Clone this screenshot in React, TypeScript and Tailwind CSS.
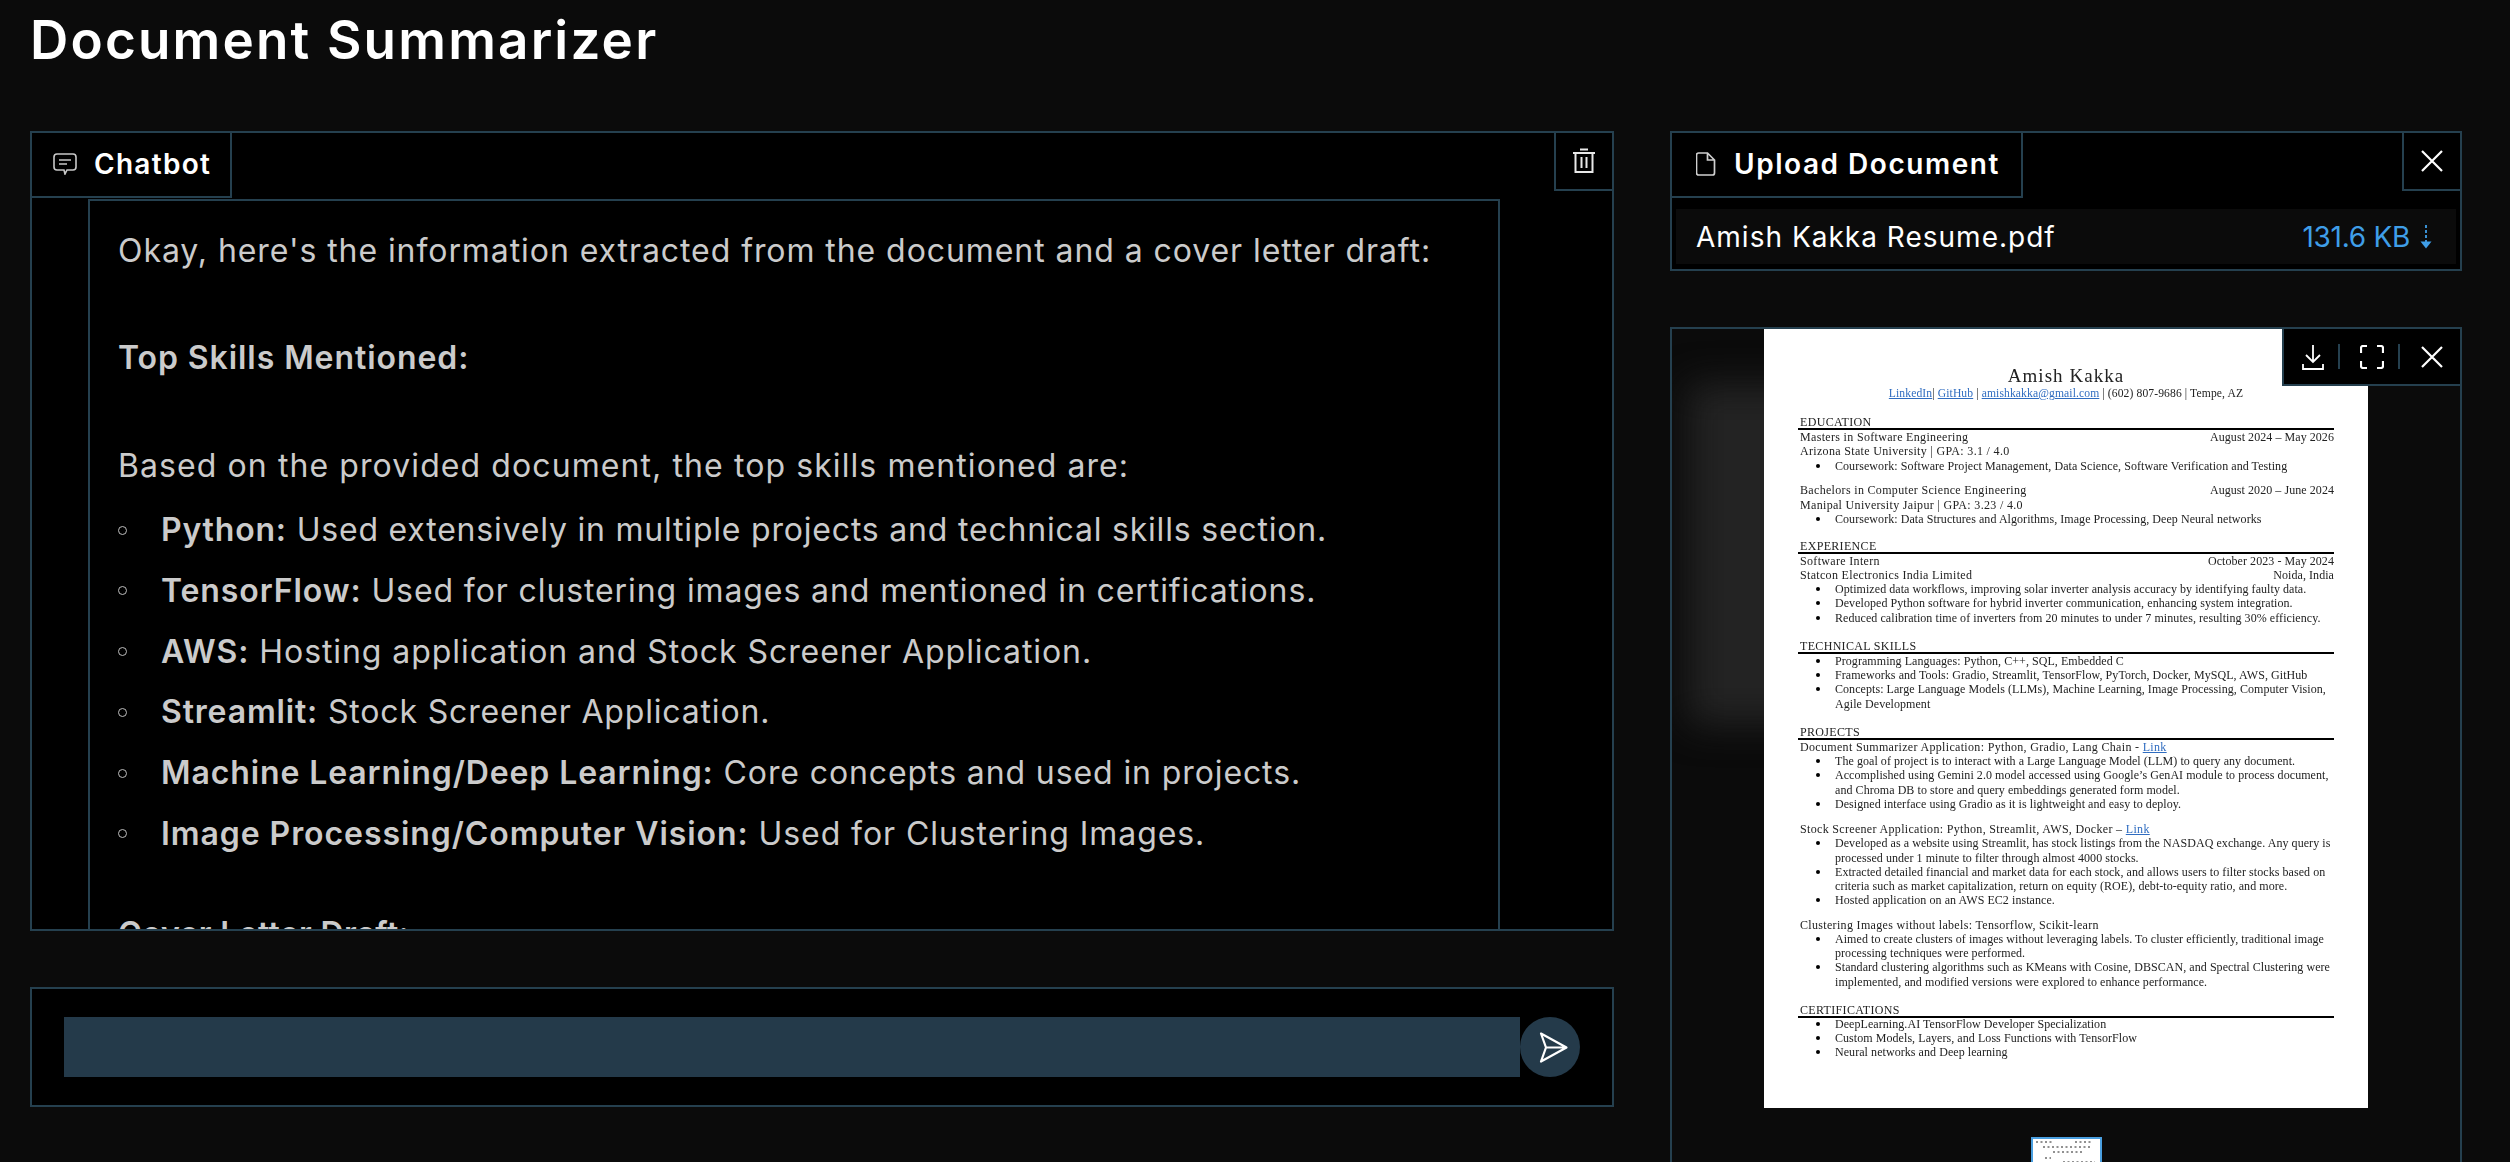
import { ReactNode } from "react";

const skills = [
  { name: "Python:", text: " Used extensively in multiple projects and technical skills section.", cls: "tracking-[0.025em]" },
  { name: "TensorFlow:", text: " Used for clustering images and mentioned in certifications.", cls: "tracking-[0.028em]" },
  { name: "AWS:", text: " Hosting application and Stock Screener Application.", cls: "tracking-[0.029em]" },
  { name: "Streamlit:", text: " Stock Screener Application.", cls: "tracking-[0.026em]" },
  { name: "Machine Learning/Deep Learning:", text: " Core concepts and used in projects.", cls: "tracking-[0.028em]" },
  { name: "Image Processing/Computer Vision:", text: " Used for Clustering Images.", cls: "tracking-[0.029em]" },
];

function CloseIcon() {
  return (
    <svg width="22" height="22" viewBox="0 0 22 22" fill="none" stroke="white" strokeWidth="2.2">
      <path d="M1 1 21 21M21 1 1 21" />
    </svg>
  );
}

function Head({ children }: { children: ReactNode }) {
  return <div className="mt-[14px] h-[13px] border-b-2 border-black leading-[14px] tracking-[0.027em] box-content pl-[2px]">{children}</div>;
}

function Row({ left, right }: { left: ReactNode; right?: string }) {
  return (
    <div className="flex justify-between h-[14.25px] pl-[2px] tracking-[0.027em]">
      <span>{left}</span>
      {right && <span className="tracking-[0.005em]">{right}</span>}
    </div>
  );
}

function Item({ children }: { children: ReactNode }) {
  return (
    <div className="relative pl-[37px]">
      <span className="absolute left-[18px] top-[5px] w-[4px] h-[4px] rounded-full bg-black" />
      {children}
    </div>
  );
}

function Link({ children }: { children: ReactNode }) {
  return <span className="text-[#2f6cc0] underline">{children}</span>;
}

function Resume() {
  return (
    <div className="relative z-10 w-[604px] h-[779px] shrink-0 bg-white px-[34px] pt-[36px] text-[#222] font-['Liberation_Serif',serif] text-[12px] leading-[14.25px] tracking-[0.005em] blur-[0.3px]">
      <div className="text-center text-[19px] leading-[22px] tracking-[0.055em]">Amish Kakka</div>
      <div className="text-center text-[11.6px] leading-[14px] tracking-[0.01em]">
        <Link>LinkedIn</Link>| <Link>GitHub</Link> | <Link>amishkakka@gmail.com</Link> | (602) 807-9686 | Tempe, AZ
      </div>

      <Head>EDUCATION</Head>
      <Row left="Masters in Software Engineering" right="August 2024 – May 2026" />
      <Row left="Arizona State University | GPA: 3.1 / 4.0" />
      <Item>Coursework: Software Project Management, Data Science, Software Verification and Testing</Item>
      <div className="mt-[10.5px]">
        <Row left="Bachelors in Computer Science Engineering" right="August 2020 – June 2024" />
      </div>
      <Row left="Manipal University Jaipur | GPA: 3.23 / 4.0" />
      <Item>Coursework: Data Structures and Algorithms, Image Processing, Deep Neural networks</Item>

      <div className="-mt-[1.5px]">
        <Head>EXPERIENCE</Head>
      </div>
      <Row left="Software Intern" right="October 2023 - May 2024" />
      <Row left="Statcon Electronics India Limited" right="Noida, India" />
      <Item>Optimized data workflows, improving solar inverter analysis accuracy by identifying faulty data.</Item>
      <Item>Developed Python software for hybrid inverter communication, enhancing system integration.</Item>
      <Item>Reduced calibration time of inverters from 20 minutes to under 7 minutes, resulting 30% efficiency.</Item>

      <Head>TECHNICAL SKILLS</Head>
      <Item>Programming Languages: Python, C++, SQL, Embedded C</Item>
      <Item>Frameworks and Tools: Gradio, Streamlit, TensorFlow, PyTorch, Docker, MySQL, AWS, GitHub</Item>
      <Item>Concepts: Large Language Models (LLMs), Machine Learning, Image Processing, Computer Vision, Agile Development</Item>

      <Head>PROJECTS</Head>
      <Row left={<>Document Summarizer Application: Python, Gradio, Lang Chain - <Link>Link</Link></>} />
      <Item>The goal of project is to interact with a Large Language Model (LLM) to query any document.</Item>
      <Item>Accomplished using Gemini 2.0 model accessed using Google’s GenAI module to process document, and Chroma DB to store and query embeddings generated form model.</Item>
      <Item>Designed interface using Gradio as it is lightweight and easy to deploy.</Item>
      <div className="mt-[11px]">
        <Row left={<>Stock Screener Application: Python, Streamlit, AWS, Docker – <Link>Link</Link></>} />
      </div>
      <Item>Developed as a website using Streamlit, has stock listings from the NASDAQ exchange. Any query is processed under 1 minute to filter through almost 4000 stocks.</Item>
      <Item>Extracted detailed financial and market data for each stock, and allows users to filter stocks based on criteria such as market capitalization, return on equity (ROE), debt-to-equity ratio, and more.</Item>
      <Item>Hosted application on an AWS EC2 instance.</Item>
      <div className="mt-[10px]">
        <Row left="Clustering Images without labels: Tensorflow, Scikit-learn" />
      </div>
      <Item>Aimed to create clusters of images without leveraging labels. To cluster efficiently, traditional image processing techniques were performed.</Item>
      <Item>Standard clustering algorithms such as KMeans with Cosine, DBSCAN, and Spectral Clustering were implemented, and modified versions were explored to enhance performance.</Item>

      <Head>CERTIFICATIONS</Head>
      <div className="-mt-[1px]">
        <Item>DeepLearning.AI TensorFlow Developer Specialization</Item>
        <Item>Custom Models, Layers, and Loss Functions with TensorFlow</Item>
        <Item>Neural networks and Deep learning</Item>
      </div>
    </div>
  );
}

function Thumb() {
  return (
    <div className="w-[71px] h-[40px] mt-[29px] shrink-0 border-2 border-[#4a9fe0] bg-white">
      <svg width="67" height="36" viewBox="0 0 67 36" stroke="#222" strokeWidth="1" strokeDasharray="2 2.5">
        <path d="M3 3H20M42 3H60M10 8H58M20 13H50M12 19H18M30 23H62M8 27H52M16 31H60" />
      </svg>
    </div>
  );
}

export default function App() {
  return (
    <div className="h-[1162px] overflow-hidden bg-[#0b0b0b] font-['Inter',sans-serif] pl-[30px] pr-[48px]">
      <h1 className="h-[131px] pt-[10px] text-[53px] leading-[60px] font-semibold tracking-[0.041em] text-white">
        Document Summarizer
      </h1>

      <div className="flex gap-[56px] items-start">
        <div className="w-[1584px] shrink-0">
          <section className="h-[800px] border-2 border-[#25404f] bg-black overflow-hidden">
            <div className="flex justify-between items-start h-[66px]">
              <div className="h-[65px] w-[200px] border-r-2 border-b-2 border-[#25404f] flex items-center gap-[17px] pl-[21px] pb-[2px] text-[28px] font-semibold tracking-[0.046em] text-white">
                <svg width="24" height="22" viewBox="0 0 24 22" fill="none" stroke="#c8c8c8" strokeWidth="1.6">
                  <path d="M4 1h16a3 3 0 0 1 3 3v10a3 3 0 0 1-3 3h-6l-2 4-1-4H4a3 3 0 0 1-3-3V4a3 3 0 0 1 3-3Z" />
                  <path d="M6 7h12M6 11h8" />
                </svg>
                <span>Chatbot</span>
              </div>
              <button className="w-[58px] h-[58px] border-l-2 border-b-2 border-[#25404f] flex items-center justify-center">
                <svg width="22" height="26" viewBox="0 0 22 26" fill="none" stroke="#e8e8e8" strokeWidth="2">
                  <path d="M7 1.5h8M0 5h22M2.5 5v19h17V5M8.5 9v11M13.5 9v11" />
                </svg>
              </button>
            </div>
            <div className="ml-[56px] w-[1412px] h-[800px] border-2 border-[#25404f] px-[28px] pt-[26px] text-[#cbcbcb] text-[32px] leading-[48px] tracking-[0.029em]">
              <p>Okay, here's the information extracted from the document and a cover letter draft:</p>
              <p className="mt-[59px] font-semibold">Top Skills Mentioned:</p>
              <p className="mt-[60px] tracking-[0.034em]">Based on the provided document, the top skills mentioned are:</p>
              <ul className="mt-[16px]">
                {skills.map((s) => (
                  <li key={s.name} className="flex items-center mb-[12.8px]">
                    <span className="w-[9px] h-[9px] rounded-full border border-[#bdbdbd] mr-[34px] shrink-0" />
                    <span className={`whitespace-pre ${s.cls}`}>
                      <b className="font-semibold">{s.name}</b>
                      {s.text}
                    </span>
                  </li>
                ))}
              </ul>
              <p className="mt-[52px] font-semibold tracking-[0.01em]">Cover Letter Draft:</p>
            </div>
          </section>

          <section className="mt-[56px] h-[120px] border-2 border-[#25404f] bg-black flex items-center pl-[32px]">
            <div className="w-[1456px] h-[60px] bg-[#243a4a]" />
            <button className="w-[60px] h-[60px] rounded-full bg-[#243a4a] flex items-center justify-center pl-[6px]">
              <svg width="29" height="31" viewBox="0 0 29 31" fill="none" stroke="white" strokeWidth="2.2" strokeLinejoin="round">
                <path d="M2 1.5 27.5 15.5 2 29.5 7 15.5ZM7 15.5H27.5" />
              </svg>
            </button>
          </section>
        </div>

        <div className="w-[792px] shrink-0">
          <section className="h-[140px] border-2 border-[#25404f] bg-black">
            <div className="flex justify-between items-start h-[65px]">
              <div className="h-[65px] w-[351px] border-r-2 border-b-2 border-[#25404f] flex items-center gap-[18px] pl-[24px] pb-[2px] text-[28px] font-semibold tracking-[0.055em] text-white">
                <svg width="20" height="24" viewBox="0 0 20 24" fill="none" stroke="#cfcfcf" strokeWidth="1.7">
                  <path d="M2.5 1h9l7 7v13a2 2 0 0 1-2 2h-14a2 2 0 0 1-2-2V3a2 2 0 0 1 2-2ZM11.5 1v7h7" />
                </svg>
                <span>Upload Document</span>
              </div>
              <button className="w-[58px] h-[58px] border-l-2 border-b-2 border-[#25404f] flex items-center justify-center">
                <CloseIcon />
              </button>
            </div>
            <div className="mt-[11px] mx-[4px] h-[55px] bg-[#0b0b0b] flex items-center justify-between pl-[20px] pr-[24px] text-[28px] tracking-[0.036em] text-white">
              <span>Amish Kakka Resume.pdf</span>
              <span className="flex items-center gap-[10px] text-[#3f9ee8] tracking-[-0.01em]">
                131.6 KB
                <svg width="12" height="24" viewBox="0 0 12 24" fill="#3f9ee8" stroke="#3f9ee8">
                  <path d="M6 0v18" strokeWidth="1.8" strokeDasharray="3 2" fill="none" />
                  <path d="M0.5 16.5H11.5L6 23.5Z" stroke="none" />
                </svg>
              </span>
            </div>
          </section>

          <section className="relative mt-[56px] h-[900px] border-2 border-[#25404f] overflow-hidden flex flex-col items-center">
            <div className="absolute left-[16px] top-[55px] w-[200px] h-[340px] bg-[#232323] blur-[18px]" />
            <div className="absolute z-20 right-0 top-0 h-[57px] w-[178px] bg-black border-l-2 border-b-2 border-[#25404f] flex items-center">
              <div className="w-[54px] flex justify-center pl-[3px]">
                <svg width="22" height="26" viewBox="0 0 22 26" fill="none" stroke="white" strokeWidth="1.8">
                  <path d="M11 1v17M4 11l7 7 7-7M1 20v5h20v-5" />
                </svg>
              </div>
              <span className="w-[2px] h-[25px] bg-[#25404f]" />
              <div className="w-[58px] flex justify-center pl-[6px]">
                <svg width="24" height="24" viewBox="0 0 24 24" fill="none" stroke="white" strokeWidth="2.2">
                  <path d="M1 8V3a2 2 0 0 1 2-2h4M17 1h4a2 2 0 0 1 2 2v5M23 16v5a2 2 0 0 1-2 2h-4M7 23H3a2 2 0 0 1-2-2v-5" />
                </svg>
              </div>
              <span className="w-[2px] h-[25px] bg-[#25404f]" />
              <div className="flex-1 flex justify-center pl-[4px]">
                <CloseIcon />
              </div>
            </div>
            <Resume />
            <Thumb />
          </section>
        </div>
      </div>
    </div>
  );
}
